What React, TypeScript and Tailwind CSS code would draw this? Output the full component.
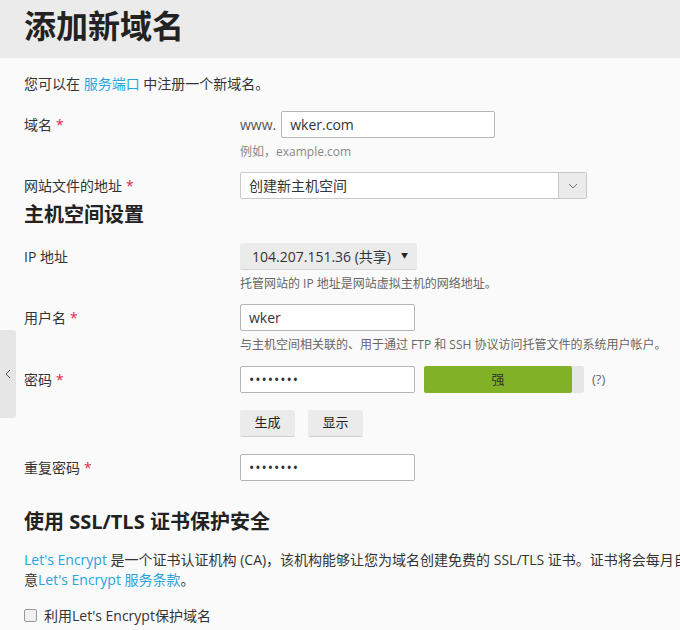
import React from "react";

const font = { fontFamily: '"Open Sans", "Noto Sans CJK SC", sans-serif' };

function Req() {
  return <span className="ml-1 text-[#e0284f]">*</span>;
}

function Row({ label, required, children, className = "" }: { label: string; required?: boolean; children: React.ReactNode; className?: string }) {
  return (
    <div className={"flex items-start " + className}>
      <div className="w-[216px] shrink-0 h-[27px] flex items-center text-[14px] text-[#333]">
        {label}
        {required && <Req />}
      </div>
      <div>{children}</div>
    </div>
  );
}

function TextBox({ value, width, dots }: { value: string; width: string; dots?: boolean }) {
  return (
    <div className={"h-[27px] bg-white border border-[#b5b5b5] rounded-[2px] flex items-center px-2 " + width}>
      {dots ? (
        <span className="text-[14px] tracking-[1px] text-[#333] leading-none">••••••••</span>
      ) : (
        <span className="text-[14px] text-[#333]">{value}</span>
      )}
    </div>
  );
}

export default function App() {
  return (
    <div className="w-[680px] h-[630px] overflow-hidden bg-[#fafafa] relative" style={font}>
      <div className="h-[58px] bg-[#ebebeb] flex items-center px-6">
        <h1 className="text-[32px] font-bold text-[#222] leading-none -mt-[6px]">添加新域名</h1>
      </div>

      <div className="px-6 w-[1000px]">
        <p className="mt-[16px] text-[14px] leading-5 text-[#333]">
          您可以在 <span className="text-[#27a5dc]">服务端口</span> 中注册一个新域名。
        </p>

        <Row label="域名" required className="mt-[17px]">
          <div className="flex items-center">
            <span className="text-[14px] text-[#555] mr-[5px]">www.</span>
            <TextBox value="wker.com" width="w-[214px]" />
          </div>
          <div className="mt-[6px] text-[12px] leading-4 text-[#888]">例如，example.com</div>
        </Row>

        <Row label="网站文件的地址" required className="mt-[12px]">
          <div className="flex w-[347px] h-[27px] border border-[#c8c8c8] rounded-[2px] bg-white">
            <div className="flex-1 flex items-center px-2 text-[14px] text-[#333]">创建新主机空间</div>
            <div className="w-[28px] bg-[#ebebeb] border-l border-[#c8c8c8] flex items-center justify-center">
              <svg width="10" height="6" viewBox="0 0 10 6" fill="none" stroke="#777" strokeWidth="1">
                <path d="M1 1l4 4 4-4" />
              </svg>
            </div>
          </div>
        </Row>

        <h2 className="mt-[4px] text-[20px] font-bold text-[#222] leading-6">主机空间设置</h2>

        <Row label="IP 地址" className="mt-[16px]">
          <div className="w-[177px] h-[27px] bg-[#ebebeb] rounded-[2px] border-b border-[#d6d6d6] flex items-center pl-[12px] pr-[9px] text-[14px] text-[#333]">
            <span className="flex-1">104.207.151.36 (共享)</span>
            <span className="text-[7px] text-[#222]">▼</span>
          </div>
          <div className="mt-[6px] text-[12px] leading-4 text-[#666]">托管网站的 IP 地址是网站虚拟主机的网络地址。</div>
        </Row>

        <Row label="用户名" required className="mt-[12px]">
          <TextBox value="wker" width="w-[175px]" />
          <div className="mt-[6px] text-[12px] leading-4 text-[#666]">与主机空间相关联的、用于通过 FTP 和 SSH 协议访问托管文件的系统用户帐户。</div>
        </Row>

        <Row label="密码" required className="mt-[13px]">
          <div className="flex items-center">
            <TextBox value="" width="w-[175px]" dots />
            <div className="ml-[9px] w-[160px] h-[27px] bg-[#e6e6e6] rounded-[2px] flex">
              <div className="w-[148px] h-full bg-[#80b127] rounded-[2px] flex items-center justify-center text-[13px] text-[#333]">强</div>
            </div>
            <span className="ml-[8px] text-[13px] text-[#666]">(?)</span>
          </div>
          <div className="mt-[17px] flex gap-[13px]">
            <button className="w-[55px] h-[27px] bg-[#ebebeb] rounded-[2px] border-b border-[#d0d0d0] text-[13px] text-[#222]">生成</button>
            <button className="w-[55px] h-[27px] bg-[#ebebeb] rounded-[2px] border-b border-[#d0d0d0] text-[13px] text-[#222]">显示</button>
          </div>
        </Row>

        <Row label="重复密码" required className="mt-[17px]">
          <TextBox value="" width="w-[175px]" dots />
        </Row>

        <h2 className="mt-[29px] text-[20px] font-bold text-[#222] leading-6">使用 SSL/TLS 证书保护安全</h2>

        <p className="mt-[16px] text-[14px] leading-5 text-[#333]">
          <span className="whitespace-nowrap">
            <span className="text-[#27a5dc]">Let's Encrypt</span> 是一个证书认证机构 (CA)，该机构能够让您为域名创建免费的 SSL/TLS 证书。证书将会每月自动续订。继续操作即表示您同
          </span>
          <br />
          意<span className="text-[#27a5dc]">Let's Encrypt 服务条款</span>。
        </p>

        <label className="mt-[15px] flex items-center text-[14px] text-[#333]">
          <span className="w-[13px] h-[13px] border border-[#999] rounded-[2px] bg-[#f0f0f0] mr-[7px]" />
          利用Let's Encrypt保护域名
        </label>
      </div>

      <div className="absolute left-0 top-[330px] w-[16px] h-[88px] bg-[#e6e6e6] rounded-r-[3px] flex items-center justify-center">
        <svg width="6" height="10" viewBox="0 0 6 10" fill="none" stroke="#555" strokeWidth="1">
          <path d="M5 1L1 5l4 4" />
        </svg>
      </div>
    </div>
  );
}
